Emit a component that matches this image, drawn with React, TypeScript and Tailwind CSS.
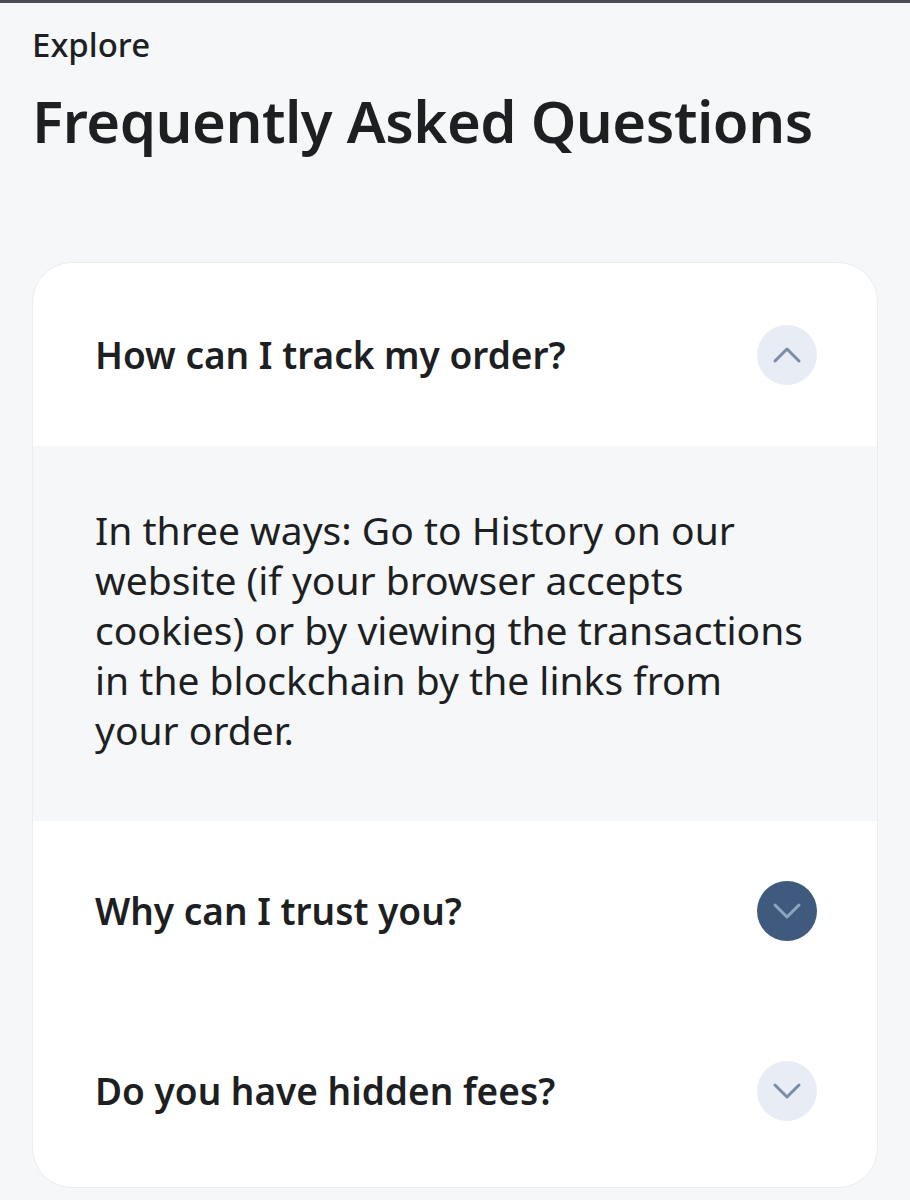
import React, { useState } from "react";

const faqs = [
  {
    q: "How can I track my order?",
    a: "In three ways: Go to History on our website (if your browser accepts cookies) or by viewing the transactions in the blockchain by the links from your order.",
  },
  { q: "Why can I trust you?", a: "" },
  { q: "Do you have hidden fees?", a: "" },
];

function Chevron({ up }: { up?: boolean }) {
  return (
    <svg width="30" height="30" viewBox="0 0 30 30" fill="none" stroke="currentColor" strokeWidth="3" strokeLinecap="round" strokeLinejoin="round">
      {up ? <path d="M3 21L15 9l12 12" /> : <path d="M3 9l12 12 12-12" />}
    </svg>
  );
}

export default function App() {
  const [open, setOpen] = useState(0);

  return (
    <main
      className="min-h-[1200px] border-t-[3px] border-[#4a4d55] bg-[#f6f7f9] px-8 pb-3 text-[#1d1f23]"
      style={{ fontFamily: '"Noto Sans", "Open Sans", sans-serif' }}
    >
      <p className="pt-[20px] text-[33px] font-medium leading-[44px]">Explore</p>
      <h1 className="mt-[18px] text-[58px] font-semibold leading-[72px] tracking-[-0.5px]">
        Frequently Asked Questions
      </h1>

      <div className="mt-[105px] overflow-hidden rounded-[40px] border border-[#e9edf2] bg-white">
        {faqs.map((f, i) => {
          const isOpen = open === i;
          const dark = i === 1;
          return (
            <div key={f.q}>
              <button
                onClick={() => setOpen(isOpen ? -1 : i)}
                className={
                  i === 0
                    ? "flex h-[183px] w-full items-center justify-between pl-[62px] pr-[60px] text-left"
                    : i === 1
                      ? "flex h-[180px] w-full items-center justify-between pl-[62px] pr-[60px] text-left"
                      : "flex h-[186px] w-full items-center justify-between pb-[6px] pl-[62px] pr-[60px] text-left"
                }
              >
                <span className="text-[37px] font-semibold">{f.q}</span>
                <span
                  className={
                    dark
                      ? "flex h-[60px] w-[60px] items-center justify-center rounded-full bg-[#3f5a7c] text-[#8ea4c3]"
                      : "flex h-[60px] w-[60px] items-center justify-center rounded-full bg-[#e8edf5] text-[#7b8ca5]"
                  }
                >
                  <Chevron up={isOpen} />
                </span>
              </button>
              {isOpen && f.a && (
                <div className="bg-[#f6f7f9] pb-[66px] pl-[62px] pr-[67px] pt-[59px] text-[39px] leading-[50px]">
                  {f.a}
                </div>
              )}
            </div>
          );
        })}
      </div>
    </main>
  );
}
